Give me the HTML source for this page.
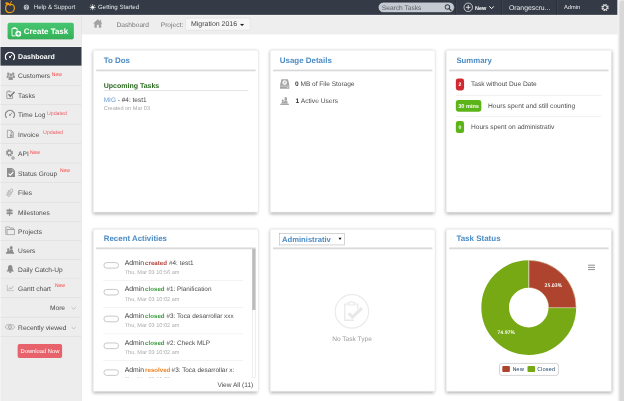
<!DOCTYPE html>
<html lang="en">
<head>
<meta charset="utf-8">
<title>Dashboard</title>
<style>
*{box-sizing:border-box;margin:0;padding:0}
html,body{width:624px;height:401px;overflow:hidden;background:#fff}
body{font-family:"Liberation Sans",Arial,sans-serif;font-size:13px;color:#555;text-rendering:geometricPrecision}
#wrap{position:absolute;left:0;top:0;width:5163.43px;height:3318.16px;transform:scale(0.12085);transform-origin:0 0;will-change:transform;overflow:hidden;background:#fff}
.a{position:absolute}
.t{position:absolute;white-space:nowrap}
.card{background:#fff;border:4px solid #e2e2e2;box-shadow:0 10px 28px rgba(0,0,0,.32)}
</style>
</head>
<body>
<div id="wrap">
<div class="a" style="left:0.0px;top:0.0px;width:5163.43px;height:3318.16px;background:#fff"></div>
<div class="a" style="left:0.0px;top:0.0px;width:5163.43px;height:283.0px;background:#eeeeee;border-bottom:4px solid #e9e9e9"></div>
<div class="a" style="left:0.0px;top:0.0px;width:675.22px;height:3326.44px;background:#ededed;border-right:4px solid #dedede"></div>
<div class="a" style="left:0.0px;top:115.85px;width:5163.43px;height:14.07px;background:#f4f4f4"></div>
<div class="a" style="left:0.0px;top:0.0px;width:5110.47px;height:122.88px;background:#343b46"></div>
<div class="a" style="left:5110.47px;top:-8.27px;width:61.23px;height:3334.71px;background:#f0f0f0"></div>
<div class="a" style="left:5124.53px;top:4.96px;width:55.44px;height:3321.47px;background:#d8d8d8;border-radius:20px"></div>
<div class="a" style="left:-8.27px;top:-8.27px;width:12.41px;height:3334.71px;background:#fafafa"></div>
<svg class="a" style="left:33.1px;top:4.96px" width="97.64" height="107.57" viewBox="0 0 24 26"><path d="M12.4 8.6 C9.4 6.4 3.2 7.4 3.2 14.6 C3.2 20.4 7 24.2 12 24.2 C17 24.2 21.2 20.4 21.2 14.8 C21.2 8 15.6 6.4 12.4 8.6 Z" fill="none" stroke="#ec9d12" stroke-width="2.5"/><path d="M11.8 8.4 C11.2 5 8.4 2.6 3.8 3.4 C3 3.6 2.2 5.4 3.2 6.6 C5.4 8.4 9 8.800 11.8 8.4 Z" fill="#ec9d12"/><path d="M12.4 9.6 C12.4 6.2 13.4 3.4 15.2 1.4" fill="none" stroke="#ec9d12" stroke-width="1.9" stroke-linecap="round"/></svg>
<svg class="a" style="left:194.46px;top:35.58px" width="47.99" height="47.99" viewBox="0 0 14 14"><circle cx="7" cy="7" r="6.600" fill="#b9bcc1"/><path d="M4.8 5.6 C4.8 2.8 9.2 2.8 9.2 5.6 C9.2 7.2 7 7 7 9" fill="none" stroke="#3a414c" stroke-width="1.7"/><path d="M7 9V13.4" stroke="#3a414c" stroke-width="1.5"/></svg>
<div class="t" style="top:31.81px;font-size:50.4px;line-height:50.4px;color:#e3e5e8;left:279.69px;">Help &amp; Support</div>
<svg class="a" style="left:739.76px;top:33.93px" width="52.96" height="52.96" viewBox="0 0 14 14"><circle cx="7" cy="7" r="3.1" fill="#fff"/><g stroke="#e8e8e8" stroke-width="1.7" stroke-linecap="round"><path d="M7 0.9V3M7 11V13.1M0.9 7H3M11 7H13.1M2.7 2.7L4.1 4.1M9.9 9.9L11.3 11.3M2.7 11.3L4.1 9.9M9.9 4.1L11.3 2.7"/></g></svg>
<div class="t" style="top:31.81px;font-size:50.4px;line-height:50.4px;color:#e3e5e8;left:811.75px;">Getting Started</div>
<div class="a" style="left:3127.84px;top:15.72px;width:633.84px;height:90.61px;background:#c5c9d1;border:4px solid #1d2127;border-radius:48px"></div>
<div class="t" style="top:33.88px;font-size:54.8px;line-height:54.8px;color:#5b6069;left:3159.29px;">Search Tasks</div>
<svg class="a" style="left:3675.63px;top:31.44px" width="63.72" height="63.72" viewBox="0 0 16 16"><circle cx="6.6" cy="6.6" r="4.7" fill="none" stroke="#3a3f47" stroke-width="2.1"/><path d="M10.2 10.2L14 14" stroke="#3a3f47" stroke-width="2.6" stroke-linecap="round"/></svg>
<div class="a" style="left:3769.14px;top:0.0px;width:4.14px;height:121.22px;background:#272d35"></div>
<div class="a" style="left:3773.27px;top:0.0px;width:4.14px;height:121.22px;background:#434b57"></div>
<div class="a" style="left:4149.77px;top:0.0px;width:4.14px;height:121.22px;background:#272d35"></div>
<div class="a" style="left:4153.91px;top:0.0px;width:4.14px;height:121.22px;background:#434b57"></div>
<div class="a" style="left:4604.88px;top:0.0px;width:4.14px;height:121.22px;background:#272d35"></div>
<div class="a" style="left:4609.02px;top:0.0px;width:4.14px;height:121.22px;background:#434b57"></div>
<svg class="a" style="left:3832.85px;top:19.03px" width="82.75" height="82.75" viewBox="0 0 21 21"><circle cx="10.5" cy="10.5" r="9" fill="none" stroke="#fff" stroke-width="1.5"/><path d="M10.5 5.6V15.4M5.6 10.5H15.4" stroke="#fff" stroke-width="1.6"/></svg>
<div class="t" style="top:44.15px;font-size:45.6px;line-height:45.6px;color:#fff;left:3930.49px;font-weight:bold;">New</div>
<svg class="a" style="left:4043.03px;top:44.68px" width="49.65" height="36.41" viewBox="0 0 12 9"><path d="M1.4 1.8L6 6.6L10.6 1.8" fill="none" stroke="#fff" stroke-width="2"/></svg>
<div class="t" style="top:35.00px;font-size:56.4px;line-height:56.4px;color:#e8e9eb;left:4211.83px;">Orangescru...</div>
<div class="t" style="top:32.37px;font-size:46.8px;line-height:46.8px;color:#f0f0f0;left:4666.94px;">Admin</div>
<svg class="a" style="left:4969.8px;top:25.65px" width="72.82" height="72.82" viewBox="0 0 18 18"><g fill="none" stroke="#e6e6e6"><circle cx="9" cy="9" r="6" stroke-width="3" stroke-dasharray="2.9 1.812"/><circle cx="9" cy="9" r="4.2" stroke-width="2"/></g></svg>
<div class="a" style="left:62.89px;top:189.49px;width:548.61px;height:134.05px;background:linear-gradient(to bottom,#45c570 0,#3cbc62 55%,#34b058 100%);border-radius:16px;box-shadow:0 4px 4px rgba(0,0,0,.15)"></div>
<svg class="a" style="left:92.68px;top:220.11px" width="85.23" height="86.06" viewBox="0 0 20.6 20.8"><path d="M3.6 3.8H1.4V18.6H8.6" fill="none" stroke="#fff" stroke-width="1.9"/><path d="M9.6 3.8H11.8V8.4" fill="none" stroke="#fff" stroke-width="1.9"/><rect x="3.8" y="1.2" width="5.6" height="3.8" rx="1" fill="#fff"/><circle cx="14.2" cy="14.4" r="6" fill="#fff"/><path d="M14.2 11V17.8M10.8 14.4H17.6" stroke="#3dbd63" stroke-width="2"/></svg>
<div class="t" style="top:225.81px;font-size:65.6px;line-height:65.6px;color:#fff;left:196.94px;font-weight:bold;">Create Task</div>
<div class="a" style="left:4.14px;top:383.12px;width:668.6px;height:7.45px;background:#f6f6f6"></div>
<div class="a" style="left:4.14px;top:388.91px;width:670.25px;height:154.32px;background:#343b46"></div>
<div class="t" style="top:439.11px;font-size:58px;line-height:58px;color:#fff;left:149.77px;font-weight:bold;">Dashboard</div>
<div class="a" style="left:4.14px;top:703.35px;width:668.6px;height:4.96px;background:#dcdcdc"></div>
<div class="t" style="top:599.04px;font-size:54.8px;line-height:54.8px;color:#4c4c4c;left:149.77px;">Customers</div>
<div class="a" style="left:4.14px;top:861.4px;width:668.6px;height:4.96px;background:#dcdcdc"></div>
<div class="t" style="top:764.53px;font-size:54.8px;line-height:54.8px;color:#4c4c4c;left:149.77px;">Tasks</div>
<div class="a" style="left:4.14px;top:1025.24px;width:668.6px;height:4.96px;background:#dcdcdc"></div>
<div class="t" style="top:921.75px;font-size:54.8px;line-height:54.8px;color:#4c4c4c;left:149.77px;">Time Log</div>
<div class="a" style="left:4.14px;top:1184.11px;width:668.6px;height:4.96px;background:#dcdcdc"></div>
<div class="t" style="top:1087.25px;font-size:54.8px;line-height:54.8px;color:#4c4c4c;left:149.77px;">Invoice</div>
<div class="a" style="left:4.14px;top:1346.3px;width:668.6px;height:4.96px;background:#dcdcdc"></div>
<div class="t" style="top:1244.47px;font-size:54.8px;line-height:54.8px;color:#4c4c4c;left:149.77px;">API</div>
<div class="a" style="left:4.14px;top:1507.65px;width:668.6px;height:4.96px;background:#dcdcdc"></div>
<div class="t" style="top:1409.96px;font-size:54.8px;line-height:54.8px;color:#4c4c4c;left:149.77px;">Status Group</div>
<div class="a" style="left:4.14px;top:1670.67px;width:668.6px;height:4.96px;background:#dcdcdc"></div>
<div class="t" style="top:1567.18px;font-size:54.8px;line-height:54.8px;color:#4c4c4c;left:149.77px;">Files</div>
<div class="a" style="left:4.14px;top:1828.71px;width:668.6px;height:4.96px;background:#dcdcdc"></div>
<div class="t" style="top:1732.68px;font-size:54.8px;line-height:54.8px;color:#4c4c4c;left:149.77px;">Milestones</div>
<div class="a" style="left:4.14px;top:1985.93px;width:668.6px;height:4.96px;background:#dcdcdc"></div>
<div class="t" style="top:1889.90px;font-size:54.8px;line-height:54.8px;color:#4c4c4c;left:149.77px;">Projects</div>
<div class="a" style="left:4.14px;top:2143.98px;width:668.6px;height:4.96px;background:#dcdcdc"></div>
<div class="t" style="top:2047.12px;font-size:54.8px;line-height:54.8px;color:#4c4c4c;left:149.77px;">Users</div>
<div class="a" style="left:4.14px;top:2299.54px;width:668.6px;height:4.96px;background:#dcdcdc"></div>
<div class="t" style="top:2204.34px;font-size:54.8px;line-height:54.8px;color:#4c4c4c;left:149.77px;">Daily Catch-Up</div>
<div class="a" style="left:4.14px;top:2460.9px;width:668.6px;height:4.96px;background:#dcdcdc"></div>
<div class="t" style="top:2361.56px;font-size:54.8px;line-height:54.8px;color:#4c4c4c;left:149.77px;">Gantt chart</div>
<div class="a" style="left:4.14px;top:2622.26px;width:668.6px;height:4.96px;background:#dcdcdc"></div>
<div class="t" style="top:2519.11px;font-size:54.4px;line-height:54.4px;color:#4c4c4c;left:413.74px;">More</div>
<div class="a" style="left:4.14px;top:2781.96px;width:668.6px;height:4.96px;background:#dcdcdc"></div>
<div class="t" style="top:2684.27px;font-size:54.8px;line-height:54.8px;color:#4c4c4c;left:149.77px;">Recently viewed</div>
<div class="t" style="top:594.00px;font-size:41.2px;line-height:41.2px;color:#ff3333;left:428.63px;">New</div>
<div class="t" style="top:914.69px;font-size:43.6px;line-height:43.6px;color:#ea6068;left:388.08px;">Updated</div>
<div class="t" style="top:1071.91px;font-size:43.6px;line-height:43.6px;color:#ea6068;left:356.64px;">Updated</div>
<div class="t" style="top:1239.43px;font-size:41.2px;line-height:41.2px;color:#ff3333;left:248.24px;">New</div>
<div class="t" style="top:1388.38px;font-size:41.2px;line-height:41.2px;color:#ff3333;left:496.48px;">New</div>
<div class="t" style="top:2339.97px;font-size:41.2px;line-height:41.2px;color:#ff3333;left:454.28px;">New</div>
<svg class="a" style="left:39.3px;top:428.22px" width="86.88" height="71.99" viewBox="0 0 21 17.4"><path d="M3.2 15.6 A9 9 0 1 1 17.8 15.6" fill="none" stroke="#ffffff" stroke-width="2.5" stroke-linecap="round"/><circle cx="10.5" cy="10.6" r="1.9" fill="#ffffff"/><path d="M10.5 10.6L14.2 7" stroke="#ffffff" stroke-width="1.8" stroke-linecap="round"/></svg>
<svg class="a" style="left:52.13px;top:594.12px" width="73.65" height="69.51" viewBox="0 0 18 17"><g fill="#969696"><circle cx="4" cy="4" r="2.5"/><circle cx="14" cy="4" r="2.5"/><circle cx="9" cy="6.2" r="2.9"/><path d="M0.6 12.4V9.4Q0.6 7 3 7H5.4Q6 9.6 4.2 10.4V12.4Z"/><path d="M17.4 12.4V9.4Q17.4 7 15 7H12.6Q12 9.6 13.8 10.4V12.4Z"/><path d="M4.6 16.4V12.4Q4.6 9.6 7.4 9.6H10.600Q13.4 9.6 13.4 12.4V16.4Z"/></g></svg>
<svg class="a" style="left:49.65px;top:744.72px" width="76.13" height="76.13" viewBox="0 0 18.4 18.4"><path d="M11 3.4H1.6V16.800H13V11" fill="none" stroke="#979797" stroke-width="1.8"/><path d="M5 8.6L8.6 12.6L17 3.6" fill="none" stroke="#7c7c7c" stroke-width="3"/><path d="M3 1.6H8.5" stroke="#9a9a9a" stroke-width="1.2"/></svg>
<svg class="a" style="left:39.3px;top:906.91px" width="86.88" height="71.99" viewBox="0 0 21 17.4"><path d="M3.2 15.6 A9 9 0 1 1 17.8 15.6" fill="none" stroke="#8b8b8b" stroke-width="2.5" stroke-linecap="round"/><circle cx="10.5" cy="10.6" r="1.9" fill="#8b8b8b"/><path d="M10.5 10.6L14.2 7" stroke="#8b8b8b" stroke-width="1.8" stroke-linecap="round"/></svg>
<svg class="a" style="left:54.61px;top:1072.4px" width="61.23" height="71.16" viewBox="0 0 14.8 17.2"><path d="M1.2 1.2H8.8L13.2 5.4V16H1.2Z" fill="none" stroke="#9a9a9a" stroke-width="1.8"/><path d="M8.600 1.2V5.6H13" fill="none" stroke="#9a9a9a" stroke-width="1.4"/><rect x="6.600" y="10" width="5" height="4.4" fill="#9a9a9a"/><path d="M7.8 10V8.6a1.3 1.3 0 0 1 2.6 0V10" fill="none" stroke="#9a9a9a" stroke-width="1.1"/></svg>
<svg class="a" style="left:43.03px;top:1230.45px" width="69.51" height="69.51" viewBox="0 0 18 18"><g fill="none" stroke="#8b8b8b"><circle cx="9" cy="9" r="6.200" stroke-width="3" stroke-dasharray="3.1 1.769"/><circle cx="9" cy="9" r="4.2" stroke-width="2.2"/></g></svg>
<svg class="a" style="left:91.02px;top:1290.86px" width="33.1" height="33.1" viewBox="0 0 8 8"><circle cx="4" cy="4" r="2.3" fill="none" stroke="#9c9c9c" stroke-width="2.2"/></svg>
<svg class="a" style="left:57.92px;top:1390.15px" width="66.2" height="74.47" viewBox="0 0 16 18"><path d="M0 0H10.600L16 5.4V18H0Z" fill="#8f8f8f"/><path d="M10.4 0V5.6H16" fill="none" stroke="#c9c9c9" stroke-width="1"/><path d="M3.4 11.4L6.600 14.4L12.6 8.4" fill="none" stroke="#fff" stroke-width="2.4"/></svg>
<svg class="a" style="left:47.99px;top:1551.51px" width="64.54" height="84.4" viewBox="0 0 15.6 20.4"><g transform="rotate(28 7.8 10.2)" fill="none" stroke="#ababab" stroke-width="1.5"><path d="M4.2 6V14.4a3.6 3.6 0 0 0 7.2 0V4.2a2.600 2.600 0 0 0 -5.2 0V13.8a1.500 1.500 0 0 0 3 0V6"/></g></svg>
<svg class="a" style="left:49.65px;top:1723.62px" width="57.92" height="63.72" viewBox="0 0 14 15.4"><path d="M7 0V15.4" stroke="#8b8b8b" stroke-width="1.8"/><path d="M1 2.4H12L13.4 4.4L12 6.4H1Z" fill="#8b8b8b"/><path d="M13 7.8H2L0.6 9.8L2 11.8H13Z" fill="#8b8b8b"/></svg>
<svg class="a" style="left:43.03px;top:1872.57px" width="80.26" height="73.65" viewBox="0 0 19.4 17.8"><path d="M1 16.800V1H8.2L9.6 3.4H16.400V6" fill="none" stroke="#999" stroke-width="1.7"/><rect x="3.6" y="6.4" width="14.8" height="10.4" fill="none" stroke="#999" stroke-width="1.7"/></svg>
<svg class="a" style="left:44.68px;top:2033.93px" width="76.13" height="67.85" viewBox="0 0 18.4 16.400"><g fill="#8b8b8b"><ellipse cx="11.6" cy="4" rx="2.8" ry="3.6"/><ellipse cx="5.6" cy="7.6" rx="2.2" ry="2.8"/><path d="M8.2 13V9.4Q8.2 7.4 10 7.4H13.2Q15 7.4 15 9.4V13Z"/><path d="M3.2 13V11Q3.2 9.8 4.4 9.8H8.600V13Z"/><path d="M0.4 15.8L2 12.6H16.400L18 15.8Z"/></g></svg>
<svg class="a" style="left:49.65px;top:2191.15px" width="69.51" height="71.16" viewBox="0 0 16.8 17.2"><g fill="#8b8b8b"><path d="M8.4 0.6C5.4 0.6 4 3 4 6C4 10 2.6 11.6 0.6 13.4H16.200C14.2 11.6 12.8 10 12.8 6C12.8 3 11.4 0.6 8.4 0.6Z"/><circle cx="8.4" cy="14.6" r="2.1"/></g></svg>
<svg class="a" style="left:54.61px;top:2354.99px" width="62.89" height="56.27" viewBox="0 0 15.2 13.6"><path d="M1 0.6V12.6H14.6" fill="none" stroke="#a5a5a5" stroke-width="1.4"/><path d="M3.2 10L6.4 6L9 9L13.600 2.6" fill="none" stroke="#a5a5a5" stroke-width="1.4"/></svg>
<svg class="a" style="left:587.51px;top:2537.03px" width="43.03" height="27.31" viewBox="0 0 10.4 6.600"><path d="M0.8 1L5.2 5.4L9.6 1" fill="none" stroke="#ababab" stroke-width="1.3"/></svg>
<svg class="a" style="left:587.51px;top:2700.04px" width="43.03" height="27.31" viewBox="0 0 10.4 6.600"><path d="M0.8 1L5.2 5.4L9.6 1" fill="none" stroke="#ababab" stroke-width="1.3"/></svg>
<svg class="a" style="left:38.06px;top:2677.7px" width="89.37" height="52.96" viewBox="0 0 21.6 12.8"><path d="M0.8 6.4C5 -0.6 16.600 -0.6 20.8 6.4C16.600 13.4 5 13.4 0.8 6.4Z" fill="none" stroke="#a0a0a0" stroke-width="1.4"/><circle cx="10.8" cy="6.4" r="3.4" fill="none" stroke="#a0a0a0" stroke-width="1.6"/><circle cx="10.8" cy="6.4" r="1.2" fill="#a0a0a0"/></svg>
<div class="a" style="left:145.64px;top:2847.33px;width:368.23px;height:114.19px;background:#e7626a;border-radius:16px"></div>
<div class="t" style="top:2881.51px;font-size:47.6px;line-height:47.6px;color:#fff;left:170.46px;">Download Now</div>
<svg class="a" style="left:767.89px;top:155.56px" width="82.75" height="75.3" viewBox="0 0 20 18.2"><path d="M10 0.6L0.4 9.4H3.2V17.6H8V12H12V17.6H16.800V9.4H19.6Z" fill="#a2a2a2"/><rect x="14.4" y="1.8" width="2.2" height="4" fill="#a2a2a2"/></svg>
<div class="t" style="top:175.21px;font-size:55px;line-height:55px;color:#777;left:964.0px;">Dashboard</div>
<div class="t" style="top:175.21px;font-size:55px;line-height:55px;color:#777;left:1329.75px;">Project:</div>
<div class="a" style="left:1534.13px;top:148.12px;width:538.68px;height:104.26px;background:#f7f7f7;border:4px solid #dadada;border-radius:16px"></div>
<div class="t" style="top:172.18px;font-size:57.6px;line-height:57.6px;color:#444;left:1580.47px;">Migration 2016</div>
<svg class="a" style="left:1984.28px;top:196.11px" width="38.06" height="19.86" viewBox="0 0 9.2 4.8"><path d="M0 0H9.2L4.6 4.8Z" fill="#222"/></svg>
<div class="a card" style="left:772.45px;top:414.15px;width:1366.16px;height:1342.57px"></div>
<div class="a" style="left:796.44px;top:571.78px;width:1318.16px;height:26.48px;background:linear-gradient(to bottom,rgba(0,0,0,0) 0,rgba(0,0,0,.17) 30%,rgba(0,0,0,.15) 48%,rgba(0,0,0,.05) 72%,rgba(0,0,0,0) 100%)"></div>
<div class="t" style="top:465.36px;font-size:65.6px;line-height:65.6px;color:#4c8cc5;left:858.5px;font-weight:bold;">To Dos</div>
<div class="t" style="top:682.39px;font-size:58px;line-height:58px;color:#2c6b20;left:858.09px;font-weight:bold;">Upcoming Tasks</div>
<div class="a" style="left:857.26px;top:744.72px;width:1199.01px;height:4.14px;background:#c8c8c8"></div>
<div class="t" style="top:803.61px;font-size:53.6px;line-height:53.6px;color:#4c4c4c;left:858.09px;"><span style="color:#6c9dd3">MIG</span> - #4: test1</div>
<div class="t" style="top:872.94px;font-size:46px;line-height:46px;color:#a8a8a8;left:858.09px;">Created on Mar 03</div>
<div class="a card" style="left:2235.42px;top:414.15px;width:1366.16px;height:1342.57px"></div>
<div class="a" style="left:2259.41px;top:571.78px;width:1318.16px;height:26.48px;background:linear-gradient(to bottom,rgba(0,0,0,0) 0,rgba(0,0,0,.17) 30%,rgba(0,0,0,.15) 48%,rgba(0,0,0,.05) 72%,rgba(0,0,0,0) 100%)"></div>
<div class="t" style="top:465.78px;font-size:65.6px;line-height:65.6px;color:#4c8cc5;left:2315.27px;font-weight:bold;">Usage Details</div>
<svg class="a" style="left:2313.61px;top:652.88px" width="83.57" height="84.4" viewBox="0 0 20.2 20.4"><path d="M3.6 0.6H16.600L19.6 13V19.8H0.6V13Z" fill="#a4a4a4"/><circle cx="10.1" cy="7.4" r="4.7" fill="#f4f4f4"/><circle cx="10.1" cy="7.4" r="1.3" fill="#a4a4a4"/><path d="M10.1 7.4L13 5" stroke="#a4a4a4" stroke-width="1"/><path d="M0.6 14.4H19.6" stroke="#e8e8e8" stroke-width="1.2"/><circle cx="16.2" cy="17.2" r="1" fill="#f4f4f4"/></svg>
<div class="t" style="top:663.43px;font-size:54px;line-height:54px;color:#4c4c4c;left:2441.04px;"><b style="color:#333">0</b> MB of File Storage</div>
<svg class="a" style="left:2315.27px;top:800.99px" width="79.44" height="71.16" viewBox="0 0 19.2 17.2"><g fill="#a8a8a8"><ellipse cx="12" cy="4.2" rx="2.8" ry="3.7"/><ellipse cx="6" cy="8" rx="2.2" ry="2.8"/><path d="M8.600 13.6V9.8Q8.600 7.8 10.4 7.8H13.600Q15.4 7.8 15.4 9.8V13.6Z"/><path d="M3.6 13.6V11.6Q3.6 10.4 4.8 10.4H9V13.6Z"/><path d="M0.4 16.600L2 13.2H17.2L18.8 16.600Z"/></g></svg>
<div class="t" style="top:803.91px;font-size:55.2px;line-height:55.2px;color:#4c4c4c;left:2445.18px;"><b style="color:#333">1</b> Active Users</div>
<div class="a card" style="left:3693.42px;top:414.15px;width:1366.16px;height:1342.57px"></div>
<div class="a" style="left:3717.42px;top:571.78px;width:1318.16px;height:26.48px;background:linear-gradient(to bottom,rgba(0,0,0,0) 0,rgba(0,0,0,.17) 30%,rgba(0,0,0,.15) 48%,rgba(0,0,0,.05) 72%,rgba(0,0,0,0) 100%)"></div>
<div class="t" style="top:466.79px;font-size:64.4px;line-height:64.4px;color:#4c8cc5;left:3776.58px;font-weight:bold;">Summary</div>
<div class="a" style="left:3771.62px;top:650.39px;width:68.68px;height:98.47px;background:#d0282f;border-radius:20px;color:#fff;font-weight:bold;font-size:42px;line-height:98.47px;text-align:center;white-space:nowrap">2</div>
<div class="t" style="top:667.23px;font-size:54.4px;line-height:54.4px;color:#4c4c4c;left:3897.39px;">Task without Due Date</div>
<div class="a" style="left:3773.27px;top:786.93px;width:1201.49px;height:4.14px;background:#e2e2e2"></div>
<div class="a" style="left:3771.62px;top:828.3px;width:211.83px;height:95.99px;background:#5cb418;border-radius:20px;color:#fff;font-weight:bold;font-size:46px;line-height:95.99px;text-align:center;white-space:nowrap">30 mins</div>
<div class="t" style="top:847.94px;font-size:55px;line-height:55px;color:#4c4c4c;left:4038.06px;">Hours spent and still counting</div>
<div class="a" style="left:3773.27px;top:962.35px;width:1201.49px;height:4.14px;background:#e2e2e2"></div>
<div class="a" style="left:3771.62px;top:1002.07px;width:68.68px;height:99.3px;background:#5cb418;border-radius:20px;color:#fff;font-weight:bold;font-size:42px;line-height:99.3px;text-align:center;white-space:nowrap">0</div>
<div class="t" style="top:1022.22px;font-size:54.4px;line-height:54.4px;color:#4c4c4c;left:3897.39px;">Hours spent on administrativ</div>
<div class="a card" style="left:772.45px;top:1896.57px;width:1366.16px;height:1342.16px"></div>
<div class="a" style="left:796.44px;top:2043.86px;width:1318.16px;height:26.48px;background:linear-gradient(to bottom,rgba(0,0,0,0) 0,rgba(0,0,0,.17) 30%,rgba(0,0,0,.15) 48%,rgba(0,0,0,.05) 72%,rgba(0,0,0,0) 100%)"></div>
<div class="t" style="top:1942.33px;font-size:65.2px;line-height:65.2px;color:#4c8cc5;left:858.92px;font-weight:bold;">Recent Activities</div>
<div class="a" style="left:827.47px;top:2060.41px;width:1257.76px;height:1064.13px;overflow:hidden">
<div class="a" style="left:28.13px;top:108.4px;width:129.09px;height:54.61px;border:8px solid #c6c6c6;border-radius:28px;background:#fff"></div>
<div class="t" style="left:204.39px;top:83.00px;font-size:56.4px;line-height:56.4px;color:#3c3c3c">Admin</div>
<div class="t" style="left:373.19px;top:87.74px;font-size:50.8px;line-height:50.8px;color:#b5433c;font-weight:bold">created</div>
<div class="t" style="left:570.96px;top:86.05px;font-size:52.8px;line-height:52.8px;color:#4c4c4c">#4: test1</div>
<div class="t" style="left:204.39px;top:166.27px;font-size:46px;line-height:46px;color:#acacac">Thu, Mar 03 10:56 am</div>
<div class="a" style="left:26.48px;top:257.34px;width:1158.46px;height:4px;background:#e6e6e6"></div>
<div class="a" style="left:28.13px;top:330.16px;width:129.09px;height:54.61px;border:8px solid #c6c6c6;border-radius:28px;background:#fff"></div>
<div class="t" style="left:204.39px;top:304.76px;font-size:56.4px;line-height:56.4px;color:#3c3c3c">Admin</div>
<div class="t" style="left:373.19px;top:309.50px;font-size:50.8px;line-height:50.8px;color:#3a9b3c;font-weight:bold">closed</div>
<div class="t" style="left:549.44px;top:307.81px;font-size:52.8px;line-height:52.8px;color:#4c4c4c">#1: Planification</div>
<div class="t" style="left:204.39px;top:388.04px;font-size:46px;line-height:46px;color:#acacac">Thu, Mar 03 10:02 am</div>
<div class="a" style="left:26.48px;top:479.11px;width:1158.46px;height:4px;background:#e6e6e6"></div>
<div class="a" style="left:28.13px;top:551.92px;width:129.09px;height:54.61px;border:8px solid #c6c6c6;border-radius:28px;background:#fff"></div>
<div class="t" style="left:204.39px;top:526.52px;font-size:56.4px;line-height:56.4px;color:#3c3c3c">Admin</div>
<div class="t" style="left:373.19px;top:531.26px;font-size:50.8px;line-height:50.8px;color:#3a9b3c;font-weight:bold">closed</div>
<div class="t" style="left:549.44px;top:529.57px;font-size:52.8px;line-height:52.8px;color:#4c4c4c">#3: Toca desarrollar xxx</div>
<div class="t" style="left:204.39px;top:609.80px;font-size:46px;line-height:46px;color:#acacac">Thu, Mar 03 10:02 am</div>
<div class="a" style="left:26.48px;top:700.87px;width:1158.46px;height:4px;background:#e6e6e6"></div>
<div class="a" style="left:28.13px;top:773.69px;width:129.09px;height:54.61px;border:8px solid #c6c6c6;border-radius:28px;background:#fff"></div>
<div class="t" style="left:204.39px;top:748.29px;font-size:56.4px;line-height:56.4px;color:#3c3c3c">Admin</div>
<div class="t" style="left:373.19px;top:753.03px;font-size:50.8px;line-height:50.8px;color:#3a9b3c;font-weight:bold">closed</div>
<div class="t" style="left:549.44px;top:751.33px;font-size:52.8px;line-height:52.8px;color:#4c4c4c">#2: Check MLP</div>
<div class="t" style="left:204.39px;top:831.56px;font-size:46px;line-height:46px;color:#acacac">Thu, Mar 03 10:02 am</div>
<div class="a" style="left:26.48px;top:922.63px;width:1158.46px;height:4px;background:#e6e6e6"></div>
<div class="a" style="left:28.13px;top:995.45px;width:129.09px;height:54.61px;border:8px solid #c6c6c6;border-radius:28px;background:#fff"></div>
<div class="t" style="left:204.39px;top:970.05px;font-size:56.4px;line-height:56.4px;color:#3c3c3c">Admin</div>
<div class="t" style="left:373.19px;top:974.79px;font-size:50.8px;line-height:50.8px;color:#f08223;font-weight:bold">resolved</div>
<div class="t" style="left:592.47px;top:973.10px;font-size:52.8px;line-height:52.8px;color:#4c4c4c">#3: Toca desarrollar x:</div>
<div class="t" style="left:204.39px;top:1053.32px;font-size:46px;line-height:46px;color:#acacac">Thu, Mar 03 10:02 am</div>
</div>
<div class="a" style="left:2086.88px;top:2057.1px;width:27.31px;height:1068.27px;border:4px solid #dcdcdc;background:#fff"></div>
<div class="a" style="left:2086.88px;top:2057.1px;width:27.31px;height:508.07px;background:#bcbcbc"></div>
<div class="t" style="top:3155.44px;font-size:54.4px;line-height:54.4px;color:#4c4c4c;left:0.0px;left:auto;right:3067.44px;">View All (11)</div>
<div class="a card" style="left:2235.42px;top:1896.57px;width:1366.16px;height:1342.16px"></div>
<div class="a" style="left:2259.41px;top:2043.86px;width:1318.16px;height:26.48px;background:linear-gradient(to bottom,rgba(0,0,0,0) 0,rgba(0,0,0,.17) 30%,rgba(0,0,0,.15) 48%,rgba(0,0,0,.05) 72%,rgba(0,0,0,0) 100%)"></div>
<div class="a" style="left:2311.96px;top:1932.15px;width:539.51px;height:96.81px;background:#fff;border:4px solid #a6a6a6"></div>
<div class="t" style="top:1948.98px;font-size:63.2px;line-height:63.2px;color:#4c8cc5;left:2333.47px;font-weight:bold;">Administrativ</div>
<svg class="a" style="left:2798.51px;top:1966.07px" width="29.79" height="19.86" viewBox="0 0 7.2 4.8"><path d="M0 0H7.2L3.6 4.8Z" fill="#111"/></svg>
<svg class="a" style="left:2767.07px;top:2431.94px" width="289.62" height="289.62" viewBox="0 0 72.4 72.4"><circle cx="36.2" cy="36.2" r="34.6" fill="none" stroke="#eaeaea" stroke-width="2.4"/><path d="M26 21H21.5V54.5H40" fill="none" stroke="#e9e9e9" stroke-width="2.8"/><path d="M44 21H48.5V31" fill="none" stroke="#e9e9e9" stroke-width="2.8"/><path d="M28 23V18H32a3.2 3.2 0 0 1 6 0H42V23Z" fill="none" stroke="#e9e9e9" stroke-width="2.4"/><path d="M29.5 40L37.5 48L57 29.5" fill="none" stroke="#e8e8e8" stroke-width="6.5"/></svg>
<div class="t" style="top:2775.63px;font-size:54.4px;line-height:54.4px;color:#9c9c9c;left:0.0px;left:2498.97px;width:827.47px;text-align:center;">No Task Type</div>
<div class="a card" style="left:3693.42px;top:1896.57px;width:1366.16px;height:1342.16px"></div>
<div class="a" style="left:3717.42px;top:2043.86px;width:1318.16px;height:26.48px;background:linear-gradient(to bottom,rgba(0,0,0,0) 0,rgba(0,0,0,.17) 30%,rgba(0,0,0,.15) 48%,rgba(0,0,0,.05) 72%,rgba(0,0,0,0) 100%)"></div>
<div class="t" style="top:1941.65px;font-size:66px;line-height:66px;color:#4c8cc5;left:3776.58px;font-weight:bold;">Task Status</div>
<svg class="a" style="left:0;top:0" width="5163.43" height="3318.16" viewBox="0 0 624 401"><circle cx="528.75" cy="307.6" r="33.60" fill="none" stroke="#77a914" stroke-width="27.60"/><path d="M528.75 260.20 A47.4 47.4 0 0 1 576.15 307.69 L548.55 307.64 A19.8 19.8 0 0 0 528.75 287.80 Z" fill="#ae432e" stroke="#fff" stroke-width="0.5" stroke-linejoin="round"/><path d="M528.75 260.20 L528.75 287.80" stroke="#e9ead0" stroke-width="0.5"/><text x="553.3" y="287.0" font-family="DejaVu Sans, Verdana, sans-serif" font-size="4.6" fill="#ffffff" stroke="#ffffff" stroke-width="0.12" text-anchor="middle">25.03%</text><text x="506.1" y="334.0" font-family="DejaVu Sans, Verdana, sans-serif" font-size="4.6" fill="#ffffff" stroke="#ffffff" stroke-width="0.12" text-anchor="middle">74.97%</text><rect x="499.5" y="363.4" width="58.9" height="12.0" rx="2.4" fill="#fff" stroke="#a8a8a8" stroke-width="0.5"/><rect x="502.3" y="366.1" width="7.6" height="5.8" rx="1" fill="#ae432e"/><text x="512.4" y="371.5" font-family="DejaVu Sans, Verdana, sans-serif" font-size="5.32" fill="#274b6d">New</text><rect x="527.5" y="366.1" width="7.6" height="5.8" rx="1" fill="#77a914"/><text x="537.3" y="371.5" font-family="DejaVu Sans, Verdana, sans-serif" font-size="5.32" fill="#274b6d">Closed</text><path d="M588 265.2H595M588 267.4H595M588 269.6H595" stroke="#909090" stroke-width="1.0"/></svg>
</div>
</body>
</html>
